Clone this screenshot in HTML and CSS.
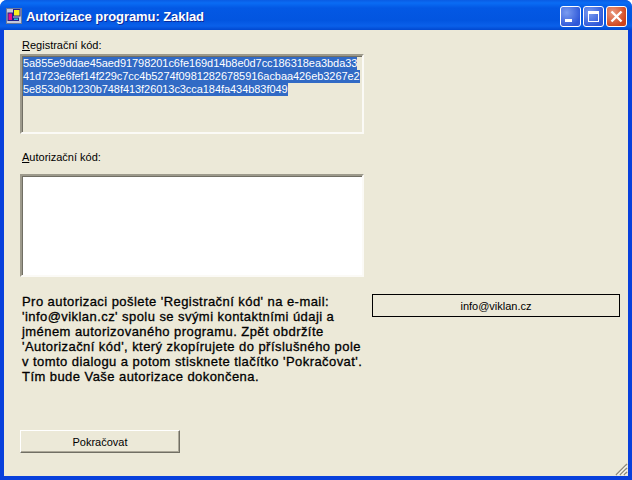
FILE: index.html
```html
<!DOCTYPE html>
<html lang="cs">

<head>
    <meta charset="UTF-8">
    <meta name="viewport" content="width=device-width, initial-scale=1.0">
    <title>Autorizace programu: Zaklad</title>

    <link rel="stylesheet" href="styles.css">
</head>

<body>
    <div class="window">
        <div class="title-bar">
            <svg class="app-icon" width="16" height="16" viewBox="0 0 16 16">
                <rect x="0.5" y="0.5" width="15" height="15" fill="#c4c8dc" stroke="#6c7a98"/>
                <rect x="2" y="5" width="4.500" height="7.500" fill="#e8108c" stroke="#20208c"/>
                <rect x="7.500" y="1.500" width="6.500" height="6.500" fill="#f8f020" stroke="#20208c"/>
                <rect x="7.500" y="10" width="5" height="2.500" fill="#20c8d0" stroke="#20208c"/>
            </svg>
            <span class="title-text">Autorizace programu: Zaklad</span>
            <div class="window-buttons">
                <div class="win-button">
                    <svg width="21" height="21" viewBox="0 0 21 21"><rect x="5" y="13" width="7" height="3" fill="#fff"/></svg>
                </div>
                <div class="win-button">
                    <svg width="21" height="21" viewBox="0 0 21 21"><path d="M5 5h11v11h-11z M6 8v7h9v-7z" fill="#fff" fill-rule="evenodd"/></svg>
                </div>
                <div class="win-button close">
                    <svg width="21" height="21" viewBox="0 0 21 21"><path d="M5.500 5.500l10 10M15.500 5.500l-10 10" stroke="#fff" stroke-width="2.400" fill="none"/></svg>
                </div>
            </div>
        </div>

        <div class="client">
            <div class="left-column">
                <label class="field-label"><u>R</u>egistrační kód:</label>
                <div class="text-box reg-box">
                    <span class="selected">5a855e9ddae45aed91798201c6fe169d14b8e0d7cc186318ea3bda33</span>
                    <span class="selected">41d723e6fef14f229c7cc4b5274f09812826785916acbaa426eb3267e2</span>
                    <span class="selected">5e853d0b1230b748f413f26013c3cca184fa434b83f049</span>
                </div>

                <label class="field-label auth-label"><u>A</u>utorizační kód:</label>
                <div class="text-box auth-box"></div>

                <p class="info-text">
                    Pro autorizaci pošlete 'Registrační kód' na e-mail:<br>
                    'info@viklan.cz' spolu se svými kontaktními údaji a<br>
                    jménem autorizovaného programu. Zpět obdržíte<br>
                    'Autorizační kód', který zkopírujete do příslušného pole<br>
                    v tomto dialogu a potom stisknete tlačítko 'Pokračovat'.<br>
                    Tím bude Vaše autorizace dokončena.
                </p>

                <button class="continue-button">Pokračovat</button>
            </div>

            <div class="right-column">
                <button class="mail-button">info@viklan.cz</button>
            </div>

            <svg class="grip" width="14" height="14" viewBox="0 0 14 14">
                <path d="M13 2L2 13M13 6L6 13M13 10L10 13" stroke="#8f8b7c" stroke-width="1.500" fill="none"/>
                <path d="M13 3.500L3.500 13M13 7.500L7.500 13M13 11.500L11.500 13" stroke="#fff" stroke-width="1" fill="none"/>
            </svg>
        </div>
    </div>
</body>

</html>
```

FILE: styles.css
```css
* {
    box-sizing: border-box;
}

html, body {
    margin: 0;
    height: 100%;
}

body {
    font-family: "Liberation Sans", Arial, sans-serif;
    font-size: 11px;
    color: #000;
    overflow: hidden;
}

.window {
    width: 632px;
    height: 480px;
    display: flex;
    flex-direction: column;
    background: #0840dc;
    border-radius: 7px 7px 0 0;
    overflow: hidden;
}

.title-bar {
    height: 30px;
    padding: 2px 5px 0 6px;
    display: flex;
    align-items: center;
    gap: 4px;
    background: linear-gradient(to bottom, #0a5ce4 0, #0a6cf4 3px, #0358e4 8px, #0255e0 20px, #0a60ea 26px, #0148d0 30px);
}

.app-icon {
    flex-shrink: 0;
}

.title-text {
    color: #fff;
    font-size: 13px;
    font-weight: bold;
    letter-spacing: -0.07px;
    text-shadow: 1px 1px 0 #0a2a9c;
}

.window-buttons {
    margin-left: auto;
    display: flex;
    gap: 2px;
}

.win-button {
    width: 21px;
    height: 21px;
    border: 1px solid #fff;
    border-radius: 3px;
    background: radial-gradient(circle at 30% 30%, #7a9cf0, #2f58d8 75%);
    display: flex;
    align-items: center;
    justify-content: center;
}

.win-button svg {
    flex-shrink: 0;
}

.win-button.close {
    background: radial-gradient(circle at 30% 30%, #ea9a80, #d0441c 75%);
}

.client {
    position: relative;
    flex: 1;
    margin: 0 4px 4px;
    padding: 8px 8px 0 16px;
    background: #ece9d8;
    display: flex;
    gap: 8px;
}

.left-column {
    width: 344px;
    display: flex;
    flex-direction: column;
    flex-shrink: 0;
}

.right-column {
    flex: 1;
    padding-top: 256px;
}

.field-label {
    height: 16px;
    padding-left: 2px;
    line-height: 14px;
}

.auth-label {
    margin-top: 16px;
    height: 24px;
}

.text-box {
    width: 344px;
    border: 2px solid;
    border-color: #9d9a8c #fbfaf6 #fbfaf6 #9d9a8c;
    box-shadow: inset 1px 1px 0 #716f64;
}

.reg-box {
    height: 80px;
    padding: 1px 1px;
    background: #ece9d8;
    display: flex;
    flex-direction: column;
    align-items: flex-start;
    line-height: 13px;
}

.selected {
    background: #316ac5;
    color: #fff;
    white-space: nowrap;
    letter-spacing: -0.06px;
}

.auth-box {
    height: 103px;
    background: #fff;
}

.info-text {
    margin: 17px 0 0 2px;
    width: 350px;
    font-size: 13px;
    line-height: 15px;
    height: 90px;
    white-space: nowrap;
    letter-spacing: 0.44px;
    -webkit-text-stroke: 0.3px #000;
}

.continue-button {
    margin-top: 46px;
    width: 160px;
    height: 23px;
    padding: 0;
    font: inherit;
    color: #000;
    background: #ece9d8;
    border: 1px solid;
    border-color: #fff #716f64 #716f64 #fff;
    box-shadow: inset -1px -1px 0 #aca899;
}

.mail-button {
    display: block;
    width: 248px;
    height: 23px;
    padding: 0;
    font: inherit;
    color: #000;
    background: #ece9d8;
    border: 1px solid #000;
}

.grip {
    position: absolute;
    right: 0;
    bottom: 0;
}
```
